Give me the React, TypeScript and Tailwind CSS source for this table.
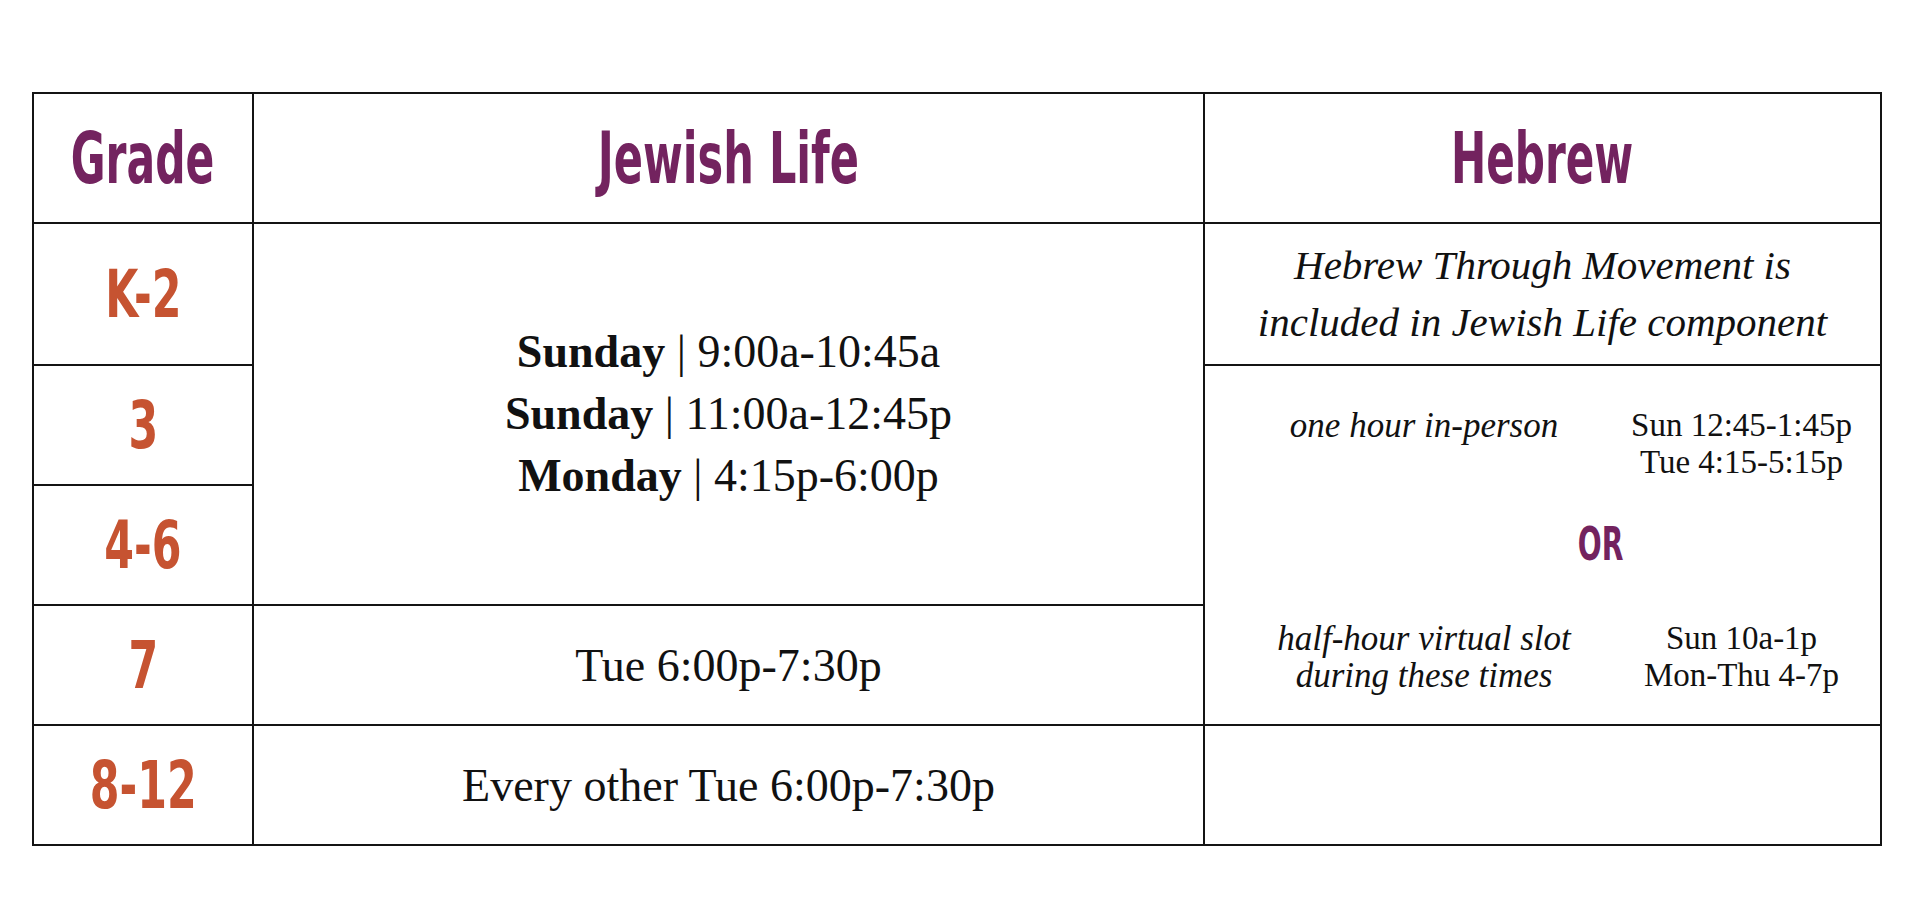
const head = "font-['Liberation_Sans_Narrow','DejaVu_Sans_Condensed',sans-serif] font-bold text-[#73235f]";
const grade = "font-['Liberation_Sans_Narrow','DejaVu_Sans_Condensed',sans-serif] font-bold text-[#c65331]";
const cell = 'flex items-center justify-center border-r-2 border-b-2 border-[#141414]';

const grades = ['K-2', '3', '4-6', '7', '8-12'];

const jewishLife = [
  { day: 'Sunday', time: '9:00a-10:45a' },
  { day: 'Sunday', time: '11:00a-12:45p' },
  { day: 'Monday', time: '4:15p-6:00p' },
];

function Slot({ label, times }: { label: string[]; times: string[] }) {
  return (
    <div className="grid grid-cols-[438px_197px] leading-[37px]">
      <div className="flex flex-col items-center whitespace-nowrap text-[35px] italic">
        {label.map((l, i) => (
          <div key={i}>{l}</div>
        ))}
      </div>
      <div className="flex flex-col items-center whitespace-nowrap text-[33px]">
        {times.map((t, i) => (
          <div key={i}>{t}</div>
        ))}
      </div>
    </div>
  );
}

export default function App() {
  return (
    <div className="min-h-[920px] w-[1920px] bg-white pl-[32px] pt-[92px] font-['Liberation_Serif',serif] text-[#111]">
      <div className="grid w-[1850px] grid-cols-[220px_951px_677px] grid-rows-[130px_142px_120px_120px_120px_120px] border-l-2 border-t-2 border-[#141414]">
        {/* header */}
        <div className={`${cell} col-start-1 row-start-1`}>
          <span className={`${head} inline-block scale-x-[0.655] text-[72px] leading-none`}>Grade</span>
        </div>
        <div className={`${cell} col-start-2 row-start-1`}>
          <span className={`${head} inline-block scale-x-[0.665] text-[72px] leading-none`}>Jewish Life</span>
        </div>
        <div className={`${cell} col-start-3 row-start-1`}>
          <span className={`${head} inline-block scale-x-[0.65] text-[72px] leading-none`}>Hebrew</span>
        </div>

        {/* grade column */}
        {grades.map((g, i) => (
          <div key={g} className={`${cell} col-start-1`} style={{ gridRowStart: i + 2 }}>
            <span className={`${grade} inline-block scale-x-[0.73] text-[65px] leading-none`}>{g}</span>
          </div>
        ))}

        {/* jewish life */}
        <div className={`${cell} col-start-2 row-start-2 row-span-3 flex-col text-[46px] leading-[62px]`}>
          {jewishLife.map((s, i) => (
            <div key={i}>
              <span className="font-bold">{s.day}</span> | {s.time}
            </div>
          ))}
        </div>
        <div className={`${cell} col-start-2 row-start-5 text-[46px]`}>Tue 6:00p-7:30p</div>
        <div className={`${cell} col-start-2 row-start-6 text-[46px]`}>Every other Tue 6:00p-7:30p</div>

        {/* hebrew */}
        <div className={`${cell} col-start-3 row-start-2 flex-col text-[41px] italic leading-[57px]`}>
          <div>Hebrew Through Movement is</div>
          <div>included in Jewish Life component</div>
        </div>
        <div className="col-start-3 row-start-3 row-span-3 flex flex-col border-r-2 border-b-2 border-[#141414] pt-[41px]">
          <Slot label={['one hour in-person']} times={['Sun 12:45-1:45p', 'Tue 4:15-5:15p']} />
          <div className="mt-[40px] pl-[116px] text-center">
            <span className={`${head} inline-block scale-x-[0.68] text-[46px] leading-none`}>OR</span>
          </div>
          <div className="mt-[53px]">
            <Slot label={['half-hour virtual slot', 'during these times']} times={['Sun 10a-1p', 'Mon-Thu 4-7p']} />
          </div>
        </div>
        <div className={`${cell} col-start-3 row-start-6`} />
      </div>
    </div>
  );
}
